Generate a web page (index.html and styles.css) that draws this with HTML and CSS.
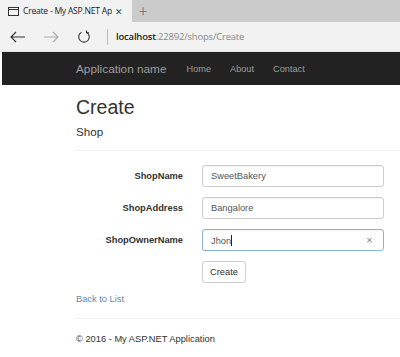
FILE: index.html
```html
<!DOCTYPE html>
<html lang="en">
<head>
    <meta charset="UTF-8">
    <title>Create - My ASP.NET Application</title>
    <link rel="stylesheet" href="styles.css">
</head>
<body>
    <!-- Browser chrome -->
    <div class="tabbar">
        <div class="tab">
            <svg class="tab-icon" width="11" height="9" viewBox="0 0 11 9">
                <rect x="0.5" y="0.5" width="10" height="8" fill="none" stroke="#333" stroke-width="1"/>
                <line x1="0.5" y1="2.5" x2="10.5" y2="2.5" stroke="#333" stroke-width="1"/>
            </svg>
            <span class="tab-title">Create - My ASP.NET Ap</span>
            <span class="tab-close">&#x2715;</span>
        </div>
        <div class="tab-new">+</div>
    </div>
    <div class="toolbar">
        <svg class="nav-btn" width="16" height="12" viewBox="0 0 16 12">
            <path d="M1 6 H15 M6 1 L1 6 L6 11" fill="none" stroke="#333" stroke-width="1.1"/>
        </svg>
        <svg class="nav-btn" width="16" height="12" viewBox="0 0 16 12">
            <path d="M1 6 H15 M10 1 L15 6 L10 11" fill="none" stroke="#aaa" stroke-width="1.1"/>
        </svg>
        <svg class="nav-btn" width="14" height="14" viewBox="0 0 14 14">
            <path d="M9.5 2.2 A5.3 5.3 0 1 1 4.5 2.2" fill="none" stroke="#333" stroke-width="1.1"/>
            <path d="M9.5 0.5 V2.6 H11.8" fill="none" stroke="#333" stroke-width="1.1"/>
        </svg>
        <div class="sep"></div>
        <div class="url"><b>localhost</b>:22892/shops/Create</div>
    </div>

    <!-- Site navbar -->
    <div class="navbar">
        <a class="brand" href="#">Application name</a>
        <a class="nav-link" href="#">Home</a>
        <a class="nav-link" href="#">About</a>
        <a class="nav-link" href="#">Contact</a>
    </div>

    <div class="body-content">
        <h2>Create</h2>
        <h4>Shop</h4>
        <hr>

        <form class="form-horizontal">
            <div class="form-group">
                <label>ShopName</label>
                <div class="field"><input type="text" value="SweetBakery"></div>
            </div>
            <div class="form-group">
                <label>ShopAddress</label>
                <div class="field"><input type="text" value="Bangalore"></div>
            </div>
            <div class="form-group">
                <label>ShopOwnerName</label>
                <div class="field focused">
                    <span class="val">Jhon<span class="caret"></span></span>
                    <span class="clear">&#x2715;</span>
                </div>
            </div>
            <div class="form-group">
                <label></label>
                <button type="button" class="btn">Create</button>
            </div>
        </form>

        <div class="back"><a href="#">Back to List</a></div>
        <hr>
        <footer>&copy; 2016 - My ASP.NET Application</footer>
    </div>
</body>
</html>
```

FILE: styles.css
```css
* {
    margin: 0;
    padding: 0;
    box-sizing: border-box;
}

body {
    background-color: white;
    font-family: "Liberation Sans", Arial, sans-serif;
    color: #333;
    overflow: hidden;
}

/* Browser chrome */
.tabbar {
    height: 22px;
    background-color: #cbcbcb;
    display: flex;
    align-items: stretch;
    font-family: "Open Sans", "Noto Sans", sans-serif;
}

.tab {
    width: 132px;
    background-color: #f2f2f2;
    display: flex;
    align-items: center;
    padding: 0 9px 0 8px;
    font-size: 8.6px;
    color: #222;
    white-space: nowrap;
}

.tab-icon {
    flex-shrink: 0;
    margin-right: 4px;
}

.tab-title {
    letter-spacing: -0.25px;
    overflow: hidden;
}

.tab-close {
    flex-shrink: 0;
    font-size: 9px;
    color: #444;
    margin-left: auto;
}

.tab-new {
    width: 22px;
    display: flex;
    align-items: center;
    justify-content: center;
    font-size: 16px;
    color: #555;
    font-weight: 300;
}

.toolbar {
    height: 30px;
    background-color: #f2f2f2;
    display: flex;
    align-items: center;
    padding-left: 10px;
    border-bottom: 1px solid #e2e2e2;
}

.nav-btn {
    margin-right: 17px;
}

.nav-btn:nth-child(3) {
    margin-left: 1px;
    margin-right: 16px;
}

.sep {
    width: 1px;
    height: 16px;
    background-color: #bbb;
    margin-right: 8px;
}

.url {
    font-family: "Open Sans", "Noto Sans", sans-serif;
    font-size: 9.5px;
    color: #888;
    letter-spacing: -0.2px;
}

.url b {
    color: #222;
    font-weight: 600;
}

/* Site navbar */
.navbar {
    height: 33px;
    margin-left: 2px;
    background-color: #222;
    display: flex;
    align-items: center;
    padding-left: 74px;
}

.navbar a {
    color: #9d9d9d;
    text-decoration: none;
}

.brand {
    font-size: 11.8px;
    margin-right: 20px;
}

.nav-link {
    font-size: 9.2px;
    margin-right: 19px;
}

/* Content */
.body-content {
    padding-left: 76px;
}

h2 {
    font-size: 19.5px;
    font-weight: normal;
    margin-top: 10px;
    line-height: 24px;
}

h4 {
    font-size: 11.6px;
    font-weight: normal;
    margin-top: 6px;
    line-height: 14px;
}

hr {
    border: none;
    border-top: 1px solid #eee;
    margin-top: 11px;
}

.form-horizontal {
    margin-top: 14px;
}

.form-group {
    display: flex;
    align-items: center;
    margin-bottom: 10px;
}

.form-group label {
    width: 107px;
    text-align: right;
    font-weight: bold;
    font-size: 9.3px;
    color: #333;
    margin-right: 19px;
}

.field {
    width: 182px;
    height: 22px;
    border: 1px solid #ccc;
    border-radius: 3px;
    display: flex;
    align-items: center;
    padding: 0 8px;
    box-shadow: inset 0 1px 1px rgba(0, 0, 0, 0.05);
}

.field input {
    border: none;
    outline: none;
    width: 100%;
    background: transparent;
    font-family: "Liberation Sans", Arial, sans-serif;
    font-size: 9.3px;
    color: #555;
}

.field.focused {
    border-color: #8fb1cc;
    justify-content: space-between;
    font-size: 9.3px;
    color: #555;
}

.caret {
    display: inline-block;
    width: 1px;
    height: 11px;
    background-color: #222;
    vertical-align: -2px;
}

.clear {
    font-size: 7.5px;
    color: #888;
    margin-right: 2px;
}

.btn {
    height: 22px;
    width: 44px;
    border: 1px solid #ccc;
    border-radius: 3px;
    background-color: white;
    font-family: "Liberation Sans", Arial, sans-serif;
    font-size: 9.3px;
    color: #333;
}

.back {
    margin-top: 1px;
    font-size: 9.3px;
    line-height: 12px;
}

.back a {
    color: #5b8ab4;
    text-decoration: none;
}

.back + hr {
    margin-top: 13px;
}

footer {
    font-size: 9.3px;
    margin-top: 15px;
}
```
